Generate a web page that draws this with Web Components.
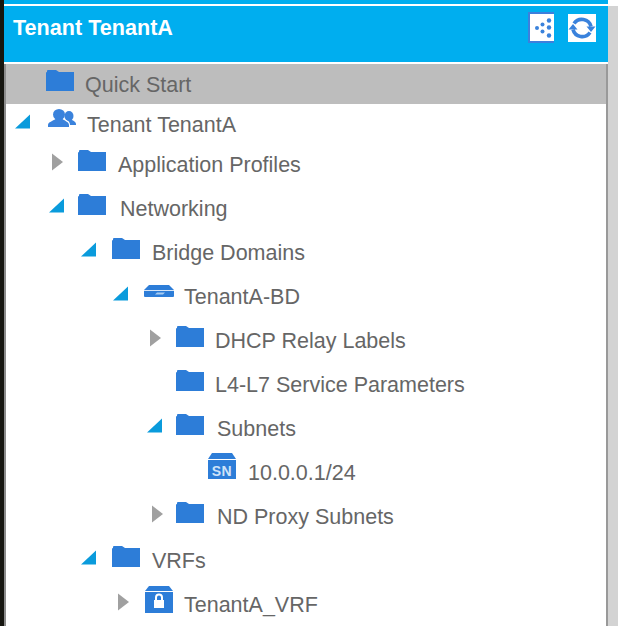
<!DOCTYPE html>
<html>
<head>
<meta charset="utf-8">
<style>
  html, body { margin: 0; padding: 0; background: #fff; }
  body { width: 622px; height: 626px; overflow: hidden; font-family: "Liberation Sans", Arial, sans-serif; }
</style>
</head>
<body>
<tenant-app>
  <panel-header slot="header" title="Tenant TenantA"></panel-header>
  <tree-row indent="0" arrow="none" icon="folder" text-left="11" selected>Quick Start</tree-row>
  <tree-row indent="0" arrow="open" icon="users" text-left="13">Tenant TenantA</tree-row>
  <tree-row indent="32" arrow="closed" icon="folder" text-left="12">Application Profiles</tree-row>
  <tree-row indent="32" arrow="open" nudge="2" icon="folder" text-left="14" tall>Networking</tree-row>
  <tree-row indent="66" arrow="open" icon="folder" text-left="12" tall>Bridge Domains</tree-row>
  <tree-row indent="98" arrow="open" icon="bd" text-left="12" tall>TenantA-BD</tree-row>
  <tree-row indent="130" arrow="closed" icon="folder" text-left="11" tall>DHCP Relay Labels</tree-row>
  <tree-row indent="130" arrow="none" icon="folder" text-left="11" tall>L4-L7 Service Parameters</tree-row>
  <tree-row indent="130" arrow="open" nudge="2" icon="folder" text-left="13" tall>Subnets</tree-row>
  <tree-row indent="162" arrow="none" icon="subnet" text-left="12" tall>10.0.0.1/24</tree-row>
  <tree-row indent="130" arrow="closed" nudge="2" icon="folder" text-left="13" tall>ND Proxy Subnets</tree-row>
  <tree-row indent="66" arrow="open" icon="folder" text-left="12" tall>VRFs</tree-row>
  <tree-row indent="98" arrow="closed" icon="vrf" text-left="12" tall>TenantA_VRF</tree-row>
</tenant-app>

<script>
class TenantApp extends HTMLElement {
  constructor() {
    super();
    this.attachShadow({mode: 'open'});
  }
  connectedCallback() {
    this.shadowRoot.innerHTML = `
    <style>
      :host { display: flex; width: 622px; height: 626px; background: #fff; overflow: hidden; }
      .rail { width: 4px; background: #161610; flex: none; }
      .main { width: 604px; flex: none; display: flex; flex-direction: column; }
      .strip { height: 4px; background: #00aeef; flex: none; }
      .head { padding: 2px 0; flex: none; }
      .tree { flex: 1; border-left: 2px solid #8c8c8c; border-right: 2px solid #999; overflow: hidden; }
      .track { width: 10px; flex: none; margin-top: 6px; background: #d3d3d3; }
    </style>
    <div class="rail"></div>
    <div class="main">
      <div class="strip"></div>
      <div class="head"><slot name="header"></slot></div>
      <div class="tree"><slot></slot></div>
    </div>
    <div class="track"></div>
    `;
  }
}
customElements.define('tenant-app', TenantApp);

class PanelHeader extends HTMLElement {
  constructor() {
    super();
    this.attachShadow({mode: 'open'});
  }
  connectedCallback() {
    this.shadowRoot.innerHTML = `
    <style>
      :host { display: flex; height: 56px; background: #00aeef; padding: 0 12px 0 9px; box-sizing: border-box; color: #fff; }
      .title { flex: 1; font: bold 21.6px/44px "Liberation Sans", Arial, sans-serif; }
      .tools { display: flex; gap: 14px; padding-top: 6px; height: 32px; }
      .tool { background: #fff; display: block; }
      .map { width: 24px; height: 27px; border: 2px solid #3d7fdc; border-right: 0; }
      .sync { width: 28px; height: 28px; margin-top: 2px; }
    </style>
    <div class="title">${this.getAttribute('title')}</div>
    <div class="tools">
      <svg class="tool map" viewBox="0 0 24 27">
        <g fill="#3a82dc">
          <circle cx="7" cy="14" r="2"/><circle cx="12.500" cy="10.500" r="2"/><circle cx="12.500" cy="17.500" r="2"/>
          <circle cx="19" cy="6.500" r="2.200"/><circle cx="19" cy="13.500" r="2.200"/><circle cx="19" cy="21.500" r="2.200"/>
        </g>
      </svg>
      <svg class="tool sync" viewBox="0 0 28 28">
        <g fill="none" stroke="#3a82dc" stroke-width="3.600">
          <path d="M6 9.500A9.500 9.500 0 0 1 23 12.500"/>
          <path d="M22 18.500A9.500 9.500 0 0 1 5 15.500"/>
        </g>
        <path d="M18.500 12.500h9l-4.500 5.500z" fill="#3a82dc"/>
        <path d="M0.500 15.500h9l-4.500-5.500z" fill="#3a82dc"/>
      </svg>
    </div>
    `;
  }
}
customElements.define('panel-header', PanelHeader);

const ICONS = {
  folder: `<svg width="28" height="21" viewBox="0 0 28 21"><path d="M0 3a1 1 0 0 1 1-1V1a1 1 0 0 1 1-1h8l3 2h15v19H0z" fill="#2d7dd8"/></svg>`,
  users: `<svg width="30" height="18" viewBox="0 0 30 18"><g fill="#3a82dc">
    <ellipse cx="13" cy="5.500" rx="6" ry="5.500"/><path d="M2 18v-2c0-3 5-4 7.500-6h7c2.500 2 6.500 3 6.500 6v2z"/>
    <ellipse cx="23" cy="7" rx="4.500" ry="5"/><path d="M21 11h5c2 1 4 2 4 4v1h-6c0-2-1-4-3-5z"/></g></svg>`,
  bd: `<svg width="30" height="12" viewBox="0 0 30 12"><path d="M5 0h20l5 5H0z" fill="#2d7dd8"/><path d="M0 6h30v5a1 1 0 0 1-1 1H1a1 1 0 0 1-1-1z" fill="#2d7dd8"/><path d="M11 9.500l2-2h8l-2 2z" fill="#a9cdf2"/><path d="M0 5h30v1H0z" fill="#d6e6f8"/></svg>`,
  subnet: `<svg width="28" height="26" viewBox="0 0 28 26"><path d="M4 0h20l4 6H0z" fill="#2d7dd8"/><path d="M0 7h28v19H0z" fill="#2d7dd8"/><text x="14" y="22.500" text-anchor="middle" font-family="Liberation Sans, Arial, sans-serif" font-weight="700" font-size="14" letter-spacing="0.500" fill="#cfe3f8">SN</text></svg>`,
  vrf: `<svg width="29" height="27" viewBox="0 0 29 27"><path d="M5 0h20l4 5H1z" fill="#2d7dd8"/><path d="M1 6h28v21H1z" fill="#2d7dd8"/><path d="M10 14h10v8H10z" fill="#fff"/><path d="M12 14v-2.500a3 3 0 0 1 6 0V14" fill="none" stroke="#fff" stroke-width="2"/></svg>`
};
// how far above the row centre each icon sits
const ICON_LIFT = {folder: -10, users: -14, bd: -13, subnet: -14, vrf: -11};

class TreeRow extends HTMLElement {
  constructor() {
    super();
    this.attachShadow({mode: 'open'});
  }
  connectedCallback() {
    const indent = Number(this.getAttribute('indent'));
    const arrow = this.getAttribute('arrow');
    const icon = this.getAttribute('icon');
    const tleft = this.getAttribute('text-left');
    const nudge = this.getAttribute('nudge') || 0;
    let mark = '';
    if (arrow == 'open') mark = `<svg width="16" height="15" viewBox="0 0 16 15"><path d="M0 14.500L15 0.500V14.500z" fill="#0a9bdc"/></svg>`;
    if (arrow == 'closed') mark = `<svg width="16" height="18" viewBox="0 0 16 18"><path d="M5 0.500L16 9L5 17.500z" fill="#a0a0a0"/></svg>`;
    this.shadowRoot.innerHTML = `
    <style>
      :host { display: flex; align-items: center; box-sizing: border-box; height: 40px; padding: 2px 0 0 ${9 + indent}px; color: #666; font: 21.5px "Liberation Sans", Arial, sans-serif; }
      :host([tall]) { height: 44px; padding-top: 6px; }
      :host([selected]) { background: #bdbdbd; }
      .arrow { width: ${31 - nudge}px; margin-left: ${nudge}px; flex: none; display: flex; align-items: center; }
      .arrow svg { display: block; margin-top: -7px; }
      .icon { width: 28px; flex: none; display: flex; align-items: center; }
      .icon svg { flex: none; display: block; margin-top: ${ICON_LIFT[icon]}px; }
      .label { margin-left: ${tleft}px; white-space: nowrap; }
    </style>
    <span class="arrow">${mark}</span>
    <span class="icon">${ICONS[icon]}</span>
    <span class="label"><slot></slot></span>
    `;
  }
}
customElements.define('tree-row', TreeRow);
</script>
</body>
</html>
